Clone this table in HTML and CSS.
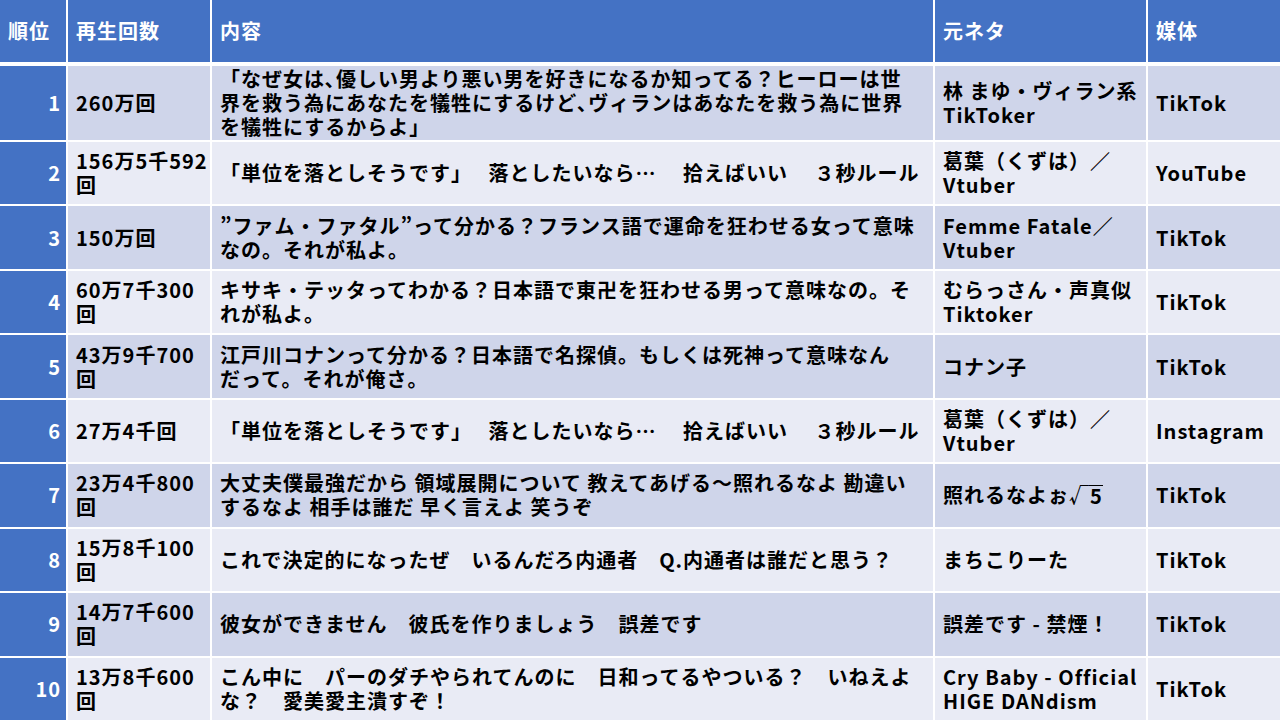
FILE: index.html
```html
<!DOCTYPE html>
<html lang="ja">
<head>
<meta charset="utf-8">
<title>再生回数ランキング</title>
<link rel="stylesheet" href="styles.css">
</head>
<body>
<div class="table">
  <div class="row head">
    <div class="cell">順位</div>
    <div class="cell">再生回数</div>
    <div class="cell">内容</div>
    <div class="cell">元ネタ</div>
    <div class="cell">媒体</div>
  </div>
  <div class="row odd first">
    <div class="cell rank">1</div>
    <div class="cell">260万回</div>
    <div class="cell">「なぜ女は､優しい男より悪い男を好きになるか知ってる？ヒーローは世<br>界を救う為にあなたを犠牲にするけど､ヴィランはあなたを救う為に世界<br>を犠牲にするからよ」</div>
    <div class="cell">林 まゆ・ヴィラン系<br>TikToker</div>
    <div class="cell">TikTok</div>
  </div>
  <div class="row even">
    <div class="cell rank">2</div>
    <div class="cell">156万5千592<br>回</div>
    <div class="cell">「単位を落としそうです」　 落としたいなら…　 拾えばいい　 ３秒ルール</div>
    <div class="cell">葛葉（くずは）／<br>Vtuber</div>
    <div class="cell">YouTube</div>
  </div>
  <div class="row odd">
    <div class="cell rank">3</div>
    <div class="cell">150万回</div>
    <div class="cell">”ファム・ファタル”って分かる？フランス語で運命を狂わせる女って意味<br>なの。それが私よ。</div>
    <div class="cell">Femme Fatale／<br>Vtuber</div>
    <div class="cell">TikTok</div>
  </div>
  <div class="row even">
    <div class="cell rank">4</div>
    <div class="cell">60万7千300<br>回</div>
    <div class="cell">キサキ・テッタってわかる？日本語で東卍を狂わせる男って意味なの。そ<br>れが私よ。</div>
    <div class="cell">むらっさん・声真似<br>Tiktoker</div>
    <div class="cell">TikTok</div>
  </div>
  <div class="row odd">
    <div class="cell rank">5</div>
    <div class="cell">43万9千700<br>回</div>
    <div class="cell">江戸川コナンって分かる？日本語で名探偵。もしくは死神って意味なん<br>だって。それが俺さ。</div>
    <div class="cell">コナン子</div>
    <div class="cell">TikTok</div>
  </div>
  <div class="row even">
    <div class="cell rank">6</div>
    <div class="cell">27万4千回</div>
    <div class="cell">「単位を落としそうです」　 落としたいなら…　 拾えばいい　 ３秒ルール</div>
    <div class="cell">葛葉（くずは）／<br>Vtuber</div>
    <div class="cell">Instagram</div>
  </div>
  <div class="row odd">
    <div class="cell rank">7</div>
    <div class="cell">23万4千800<br>回</div>
    <div class="cell">大丈夫僕最強だから 領域展開について 教えてあげる～照れるなよ 勘違い<br>するなよ 相手は誰だ 早く言えよ 笑うぞ</div>
    <div class="cell">照れるなよぉ√<span class="ov">5</span></div>
    <div class="cell">TikTok</div>
  </div>
  <div class="row even">
    <div class="cell rank">8</div>
    <div class="cell">15万8千100<br>回</div>
    <div class="cell">これで決定的になったぜ　いるんだろ内通者　Q.内通者は誰だと思う？</div>
    <div class="cell">まちこりーた</div>
    <div class="cell">TikTok</div>
  </div>
  <div class="row odd">
    <div class="cell rank">9</div>
    <div class="cell">14万7千600<br>回</div>
    <div class="cell">彼女ができません　彼氏を作りましょう　誤差です</div>
    <div class="cell">誤差です - 禁煙！</div>
    <div class="cell">TikTok</div>
  </div>
  <div class="row even">
    <div class="cell rank">10</div>
    <div class="cell">13万8千600<br>回</div>
    <div class="cell">こん中に　パーのダチやられてんのに　日和ってるやついる？　いねえよ<br>な？　愛美愛主潰すぞ！</div>
    <div class="cell">Cry Baby - Official<br>HIGE DANdism</div>
    <div class="cell">TikTok</div>
  </div>
</div>
</body>
</html>
```

FILE: styles.css
```css
html, body {
  margin: 0;
  padding: 0;
  background: #ffffff;
}

body {
  width: 1280px;
  height: 720px;
  overflow: hidden;
  font-family: "Noto Sans CJK JP", "Noto Sans", sans-serif;
  font-weight: 700;
  font-size: 20px;
  line-height: 24px;
  letter-spacing: 1px;
  color: #000000;
}

.table {
  display: flex;
  flex-direction: column;
  gap: 2px;
  height: 720px;
}

.row {
  display: grid;
  grid-template-columns: 66px 142px 721px 211px 132px;
  column-gap: 2px;
  flex: 1 1 0;
  min-height: 0;
}

.row.head {
  flex: 0 0 62px;
  margin-bottom: 2px;
}

.row.first {
  flex: 0 0 74px;
}

.cell {
  display: flex;
  align-items: center;
  padding: 0 6px 0 8px;
  white-space: pre;
}

.head .cell {
  background: #4472c4;
  color: #ffffff;
}

.odd .cell {
  background: #cfd5ea;
}

.even .cell {
  background: #e9ebf5;
}

.row .cell.rank {
  background: #4472c4;
  color: #ffffff;
  justify-content: flex-end;
  padding-right: 5px;
}

.ov {
  display: inline-block;
  line-height: 20px;
  border-top: 1px solid #000000;
  margin-left: -1px;
  padding-left: 1px;
}
```
